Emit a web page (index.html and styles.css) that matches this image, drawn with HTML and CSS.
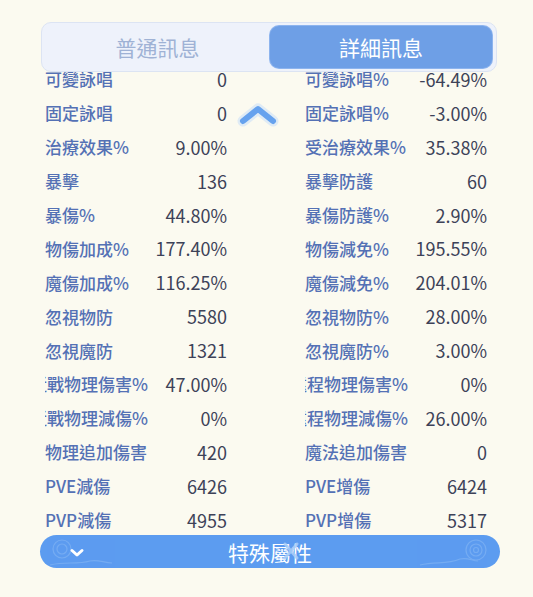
FILE: index.html
```html
<!DOCTYPE html>
<html lang="zh-Hant">
<head>
<meta charset="utf-8">
<link rel="stylesheet" href="styles.css">
</head>
<body>
<div class="panel">
  <div class="tabs">
    <div class="tab">普通訊息</div>
    <div class="tab active">詳細訊息</div>
  </div>
  <div class="list">
    <div class="grid">
      <div class="row"><span class="lab">可變詠唱</span><span class="val">0</span></div>
      <div class="row"><span class="lab">可變詠唱%</span><span class="val">-64.49%</span></div>
      <div class="row"><span class="lab">固定詠唱</span><span class="val">0</span></div>
      <div class="row"><span class="lab">固定詠唱%</span><span class="val">-3.00%</span></div>
      <div class="row"><span class="lab">治療效果%</span><span class="val">9.00%</span></div>
      <div class="row"><span class="lab">受治療效果%</span><span class="val">35.38%</span></div>
      <div class="row"><span class="lab">暴擊</span><span class="val">136</span></div>
      <div class="row"><span class="lab">暴擊防護</span><span class="val">60</span></div>
      <div class="row"><span class="lab">暴傷%</span><span class="val">44.80%</span></div>
      <div class="row"><span class="lab">暴傷防護%</span><span class="val">2.90%</span></div>
      <div class="row"><span class="lab">物傷加成%</span><span class="val">177.40%</span></div>
      <div class="row"><span class="lab">物傷減免%</span><span class="val">195.55%</span></div>
      <div class="row"><span class="lab">魔傷加成%</span><span class="val">116.25%</span></div>
      <div class="row"><span class="lab">魔傷減免%</span><span class="val">204.01%</span></div>
      <div class="row"><span class="lab">忽視物防</span><span class="val">5580</span></div>
      <div class="row"><span class="lab">忽視物防%</span><span class="val">28.00%</span></div>
      <div class="row"><span class="lab">忽視魔防</span><span class="val">1321</span></div>
      <div class="row"><span class="lab">忽視魔防%</span><span class="val">3.00%</span></div>
      <div class="row"><span class="lab clip"><span class="shift">近戰物理傷害%</span></span><span class="val">47.00%</span></div>
      <div class="row"><span class="lab clip"><span class="shift">遠程物理傷害%</span></span><span class="val">0%</span></div>
      <div class="row"><span class="lab clip"><span class="shift">近戰物理減傷%</span></span><span class="val">0%</span></div>
      <div class="row"><span class="lab clip"><span class="shift">遠程物理減傷%</span></span><span class="val">26.00%</span></div>
      <div class="row"><span class="lab">物理追加傷害</span><span class="val">420</span></div>
      <div class="row"><span class="lab">魔法追加傷害</span><span class="val">0</span></div>
      <div class="row"><span class="lab">PVE減傷</span><span class="val">6426</span></div>
      <div class="row"><span class="lab">PVE增傷</span><span class="val">6424</span></div>
      <div class="row"><span class="lab">PVP減傷</span><span class="val">4955</span></div>
      <div class="row"><span class="lab">PVP增傷</span><span class="val">5317</span></div>
    </div>
    <svg class="up" width="42" height="26" viewBox="0 0 42 26">
      <path d="M6 20 L21 8 L36 20" fill="none" stroke="#c4dcfa" stroke-width="11" stroke-linecap="round" stroke-linejoin="round" opacity="0.5"/>
      <path d="M6 20 L21 8 L36 20" fill="none" stroke="#66a2ee" stroke-width="6" stroke-linecap="round" stroke-linejoin="round"/>
    </svg>
  </div>
  <div class="bar">
    <svg class="swirl left" width="70" height="33" viewBox="0 0 70 33">
      <g fill="none" stroke="#86b7f4" stroke-width="1.2">
        <circle cx="16" cy="14" r="9"/>
        <circle cx="16" cy="14" r="5"/>
        <path d="M4 30 C20 26 30 30 44 26 C52 24 58 28 66 28"/>
      </g>
    </svg>
    <svg class="down" width="16" height="10" viewBox="0 0 16 10">
      <path d="M3 2.5 L8 7 L13 2.5" fill="none" stroke="#fff" stroke-width="3" stroke-linecap="round" stroke-linejoin="round"/>
    </svg>
    <span class="bar-title">特殊屬性</span>
    <svg class="xmark" width="22" height="22" viewBox="0 0 22 22">
      <path d="M5 4 L17 18 M17 4 L5 18" stroke="#a9cdf7" stroke-width="3" stroke-linecap="round" opacity="0.85"/>
    </svg>
    <svg class="swirl right" width="80" height="33" viewBox="0 0 80 33">
      <g fill="none" stroke="#86b7f4" stroke-width="1.2">
        <circle cx="60" cy="15" r="10"/>
        <circle cx="60" cy="15" r="6"/>
        <circle cx="60" cy="15" r="2.5"/>
        <path d="M4 30 C20 26 30 30 44 24 C52 22 56 26 62 26"/>
      </g>
    </svg>
  </div>
</div>
</body>
</html>
```
FILE: styles.css
```css
* { box-sizing: border-box; }
html, body { margin: 0; padding: 0; }
body {
  width: 533px;
  height: 597px;
  background: #fbfaf0;
  font-family: "Noto Sans CJK TC", "Noto Sans", sans-serif;
  overflow: hidden;
}
.panel {
  padding: 22px 0 0 40px;
  width: 533px;
}
.tabs {
  position: relative;
  z-index: 2;
  margin-left: 1px;
  width: 456px;
  height: 50px;
  display: flex;
  padding: 3px 4px 3px 3px;
  background: #eef2fb;
  border: 1px solid #dce4f3;
  border-radius: 10px;
}
.tab {
  flex: 1;
  display: flex;
  align-items: center;
  justify-content: center;
  font-size: 21px;
  color: #9fb2d5;
}
.tab.active {
  flex: 0 0 222px;
  background: #6e9fe6;
  color: #fff;
  border-radius: 9px;
  box-shadow: 0 0 0 1px #8db4ee;
}
.list {
  position: relative;
  margin-top: -10px;
  z-index: 1;
}
.grid {
  display: grid;
  grid-template-columns: 182px 182px;
  column-gap: 78px;
  margin-left: 5px;
}
.row {
  height: 33.9px;
  display: flex;
  align-items: center;
  justify-content: space-between;
  font-size: 17px;
  white-space: nowrap;
}
.lab {
  color: #5471b5;
  font-weight: 500;
}
.lab.clip {
  width: 112px;
  overflow: hidden;
}
.shift {
  display: inline-block;
  margin-left: -15px;
}
.val {
  color: #3d4258;
  font-size: 18px;
}
.up {
  position: absolute;
  left: 197px;
  top: 39px;
}
.bar {
  position: relative;
  z-index: 2;
  margin-top: -1px;
  width: 460px;
  height: 33px;
  border-radius: 17px;
  background: #5c9cf0;
  display: flex;
  align-items: center;
  justify-content: center;
  overflow: hidden;
}
.bar-title {
  font-size: 21px;
  color: #fff;
}
.down {
  position: absolute;
  left: 29px;
  top: 13px;
}
.xmark {
  position: absolute;
  left: 240px;
  top: 5px;
}
.swirl {
  position: absolute;
  top: 0;
  opacity: 0.6;
}
.swirl.left { left: 6px; }
.swirl.right { right: 4px; }
```
